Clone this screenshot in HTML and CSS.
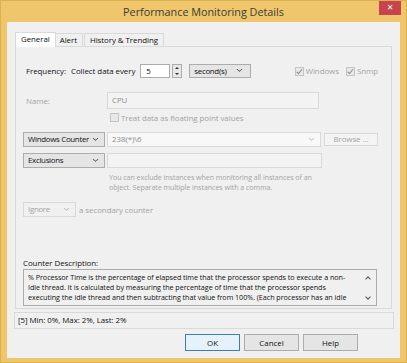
FILE: index.html
```html
<!DOCTYPE html>
<html lang="en">
<head>
    <meta charset="UTF-8">
    <title>Performance Monitoring Details</title>
    <link rel="stylesheet" href="styles.css">
</head>
<body>
    <div class="window">
        <div class="titlebar">
            <span></span>
            <span class="title">Performance Monitoring Details</span>
            <button class="close-button">&#x2715;</button>
        </div>
        <div class="client">
            <div class="tabs">
                <div class="tab active">General</div>
                <div class="tab">Alert</div>
                <div class="tab">History &amp; Trending</div>
            </div>
            <div class="panel">
                <div class="row freq-row">
                    <span class="label">Frequency:</span>
                    <span class="collect">Collect data every</span>
                    <span class="spin-input">5</span>
                    <span class="spin">
                        <span class="spin-up"></span>
                        <span class="spin-down"></span>
                    </span>
                    <span class="select unit-select">second(s)<span class="arrow"></span></span>
                    <span class="checks">
                        <span class="check checked"></span><span class="muted">Windows</span>
                        <span class="check checked snmp"></span><span class="muted">Snmp</span>
                    </span>
                </div>
                <div class="row name-row">
                    <span class="name-label muted">Name:</span>
                    <span class="field name-field">CPU</span>
                </div>
                <div class="row treat-row">
                    <span class="check"></span>
                    <span class="muted">Treat data as floating point values</span>
                </div>
                <div class="row counter-row">
                    <span class="select type-select">Windows Counter<span class="arrow"></span></span>
                    <span class="field combo-field">238(*)\6<span class="arrow light"></span></span>
                    <span class="browse">Browse ...</span>
                </div>
                <div class="row excl-row">
                    <span class="select type-select">Exclusions<span class="arrow"></span></span>
                    <span class="field excl-field"></span>
                </div>
                <p class="hint">You can exclude instances when monitoring all instances of an<br>object. Separate multiple instances with a comma.</p>
                <div class="row ignore-row">
                    <span class="select ignore-select">Ignore<span class="arrow light"></span></span>
                    <span class="muted">a secondary counter</span>
                </div>
                <div class="desc-label">Counter Description:</div>
                <div class="desc-box">
                    <p class="desc-text">% Processor Time is the percentage of elapsed time that the processor spends to execute a non-<br>Idle thread. It is calculated by measuring the percentage of time that the processor spends<br>executing the idle thread and then subtracting that value from 100%. (Each processor has an idle</p>
                    <div class="scroller">
                        <span class="scroll-up"></span>
                        <span class="scroll-down"></span>
                    </div>
                </div>
            </div>
            <div class="status">[5] Min: 0%, Max: 2%, Last: 2%</div>
            <div class="buttons">
                <button class="btn default">OK</button>
                <button class="btn">Cancel</button>
                <button class="btn">Help</button>
            </div>
        </div>
    </div>
</body>
</html>
```

FILE: styles.css
```css
body {
    margin: 0;
    background: #efc66b;
    font-family: 'Open Sans', 'Noto Sans', sans-serif;
    font-size: 7.9px;
    letter-spacing: -0.05px;
    color: #111;
}

.window {
    width: 407px;
    height: 363px;
    box-sizing: border-box;
    border: 1px solid #dcb150;
    background: #efc66b;
}

.titlebar {
    display: grid;
    grid-template-columns: 27px 1fr 27px;
    height: 21px;
}

.title {
    text-align: center;
    font-size: 10.8px;
    letter-spacing: 0;
    line-height: 21px;
    color: #3a3a3a;
}

.close-button {
    width: 22px;
    height: 14px;
    padding: 0;
    border: none;
    background: #c8434b;
    color: #fff;
    font-size: 8px;
    font-weight: bold;
    line-height: 14px;
    font-family: 'DejaVu Sans', sans-serif;
}

.client {
    margin-left: 6px;
    width: 393px;
    height: 336px;
    background: #f0f0f0;
    padding-top: 10px;
    box-sizing: border-box;
}

.tabs {
    display: flex;
    align-items: flex-end;
    margin-left: 8px;
    height: 14px;
}

.tab {
    height: 12px;
    line-height: 12px;
    padding: 0 5px;
    border: 1px solid #d9d9d9;
    border-bottom: none;
    background: #f0f0f0;
}

.tab.active {
    height: 14px;
    background: #fff;
    position: relative;
    z-index: 1;
    margin-bottom: -1px;
}

.tab + .tab {
    margin-left: 1px;
}

.tab.active + .tab {
    margin-left: -1px;
    border-left: none;
}

.panel {
    margin-left: 8px;
    width: 377px;
    height: 263px;
    box-sizing: border-box;
    border: 1px solid #d9d9d9;
    padding-left: 7px;
    display: flex;
    flex-direction: column;
}

.row {
    display: flex;
    align-items: center;
    white-space: nowrap;
}

.muted {
    color: #a3a3a3;
}

.freq-row {
    margin-top: 17px;
    height: 14px;
}

.freq-row .label {
    margin-left: 3px;
}

.collect {
    margin-left: 5px;
}

.spin-input {
    margin-left: 5px;
    width: 30px;
    height: 14px;
    box-sizing: border-box;
    border: 1px solid #acacac;
    background: #fff;
    padding-left: 5px;
    line-height: 12px;
}

.spin {
    margin-left: 2px;
    width: 10px;
    height: 14px;
    box-sizing: border-box;
    border: 1px solid #acacac;
    background: #e8e8e8;
    display: flex;
    flex-direction: column;
    align-items: center;
    justify-content: space-around;
}

.spin-up,
.spin-down {
    width: 0;
    height: 0;
    border-left: 2px solid transparent;
    border-right: 2px solid transparent;
}

.spin-up {
    border-bottom: 2px solid #333;
}

.spin-down {
    border-top: 2px solid #333;
}

.select {
    height: 15px;
    box-sizing: border-box;
    border: 1px solid #acacac;
    background: #e5e5e5;
    padding-left: 4px;
    line-height: 13px;
    letter-spacing: -0.3px;
    position: relative;
    overflow: hidden;
}

.arrow {
    position: absolute;
    right: 6px;
    top: 3px;
    width: 4px;
    height: 4px;
    border-right: 1.2px solid #333;
    border-bottom: 1.2px solid #333;
    transform: scale(0.8, 0.6) rotate(45deg);
}

.arrow.light {
    border-color: #b0b0b0;
}

.unit-select {
    margin-left: 7px;
    width: 62px;
    height: 14px;
    line-height: 12px;
}

.unit-select .arrow {
    right: 8px;
    top: 2px;
}

.checks {
    margin-left: auto;
    margin-right: 13px;
    display: flex;
    align-items: center;
}

.check {
    width: 9px;
    height: 9px;
    box-sizing: border-box;
    border: 1px solid #c4c4c4;
    background: #e8e8e8;
    margin-right: 2px;
    position: relative;
}

.check.checked::after {
    content: '';
    position: absolute;
    left: 2.5px;
    top: 0.5px;
    width: 2px;
    height: 4.5px;
    border-right: 1.2px solid #8a8a8a;
    border-bottom: 1.2px solid #8a8a8a;
    transform: rotate(40deg);
}

.check.snmp {
    margin-left: 7px;
}

.name-row {
    margin-top: 14px;
}

.name-label {
    margin-left: 3px;
    width: 81px;
}

.field {
    height: 17px;
    box-sizing: border-box;
    border: 1px solid #d9d9d9;
    background: #f3f3f3;
    color: #8c8c8c;
    padding-left: 4px;
    line-height: 15px;
    position: relative;
}

.name-field {
    width: 212px;
}

.treat-row {
    margin-top: 4px;
    margin-left: 87px;
    height: 9px;
}

.counter-row {
    margin-top: 10px;
}

.type-select {
    width: 82px;
}

.combo-field {
    margin-left: 2px;
    width: 214px;
    height: 15px;
    line-height: 13px;
    background: #f8f8f8;
}

.combo-field .arrow {
    top: 3px;
}

.browse {
    margin-left: 3px;
    width: 54px;
    height: 13px;
    box-sizing: border-box;
    border: 1px solid #d9d9d9;
    background: #f4f4f4;
    color: #a3a3a3;
    text-align: center;
    line-height: 11px;
}

.excl-row {
    margin-top: 6px;
}

.excl-field {
    margin-left: 2px;
    width: 215px;
    height: 15px;
}

.hint {
    margin: 4px 0 0 86px;
    font-size: 7.1px;
    line-height: 10px;
    color: #a3a3a3;
}

.ignore-row {
    margin-top: 10px;
}

.ignore-select {
    width: 53px;
    background: #f0f0f0;
    border-color: #d9d9d9;
    color: #a3a3a3;
    margin-right: 3px;
}

.desc-label {
    margin-top: auto;
    line-height: 12px;
}

.desc-box {
    width: 354px;
    height: 37px;
    box-sizing: border-box;
    border: 1px solid #acacac;
    display: flex;
    margin-bottom: 2px;
}

.desc-text {
    margin: 2px 0 0 4px;
    font-size: 7.2px;
    line-height: 10px;
    white-space: nowrap;
}

.scroller {
    margin-left: auto;
    width: 17px;
    display: flex;
    flex-direction: column;
    align-items: center;
    justify-content: space-between;
    padding: 7px 0 6px;
    box-sizing: border-box;
}

.scroll-up,
.scroll-down {
    width: 3px;
    height: 3px;
    border-left: 1.2px solid #555;
    border-top: 1.2px solid #555;
}

.scroll-up {
    transform: rotate(45deg);
}

.scroll-down {
    transform: rotate(225deg);
}

.status {
    margin: 3px 0 0 7px;
    width: 380px;
    height: 17px;
    box-sizing: border-box;
    border: 1px solid #d9d9d9;
    padding-left: 3px;
    line-height: 15px;
}

.buttons {
    display: flex;
    justify-content: flex-end;
    gap: 4px;
    margin-top: 5px;
    padding-right: 42px;
}

.btn {
    width: 55px;
    height: 17px;
    padding: 0;
    border: 1px solid #acacac;
    background: #e5e5e5;
    font-family: 'Open Sans', 'Noto Sans', sans-serif;
    font-size: 7.9px;
    color: #111;
}

.btn.default {
    border-color: #3c7fb1;
    background: #e5f1fb;
}
```
